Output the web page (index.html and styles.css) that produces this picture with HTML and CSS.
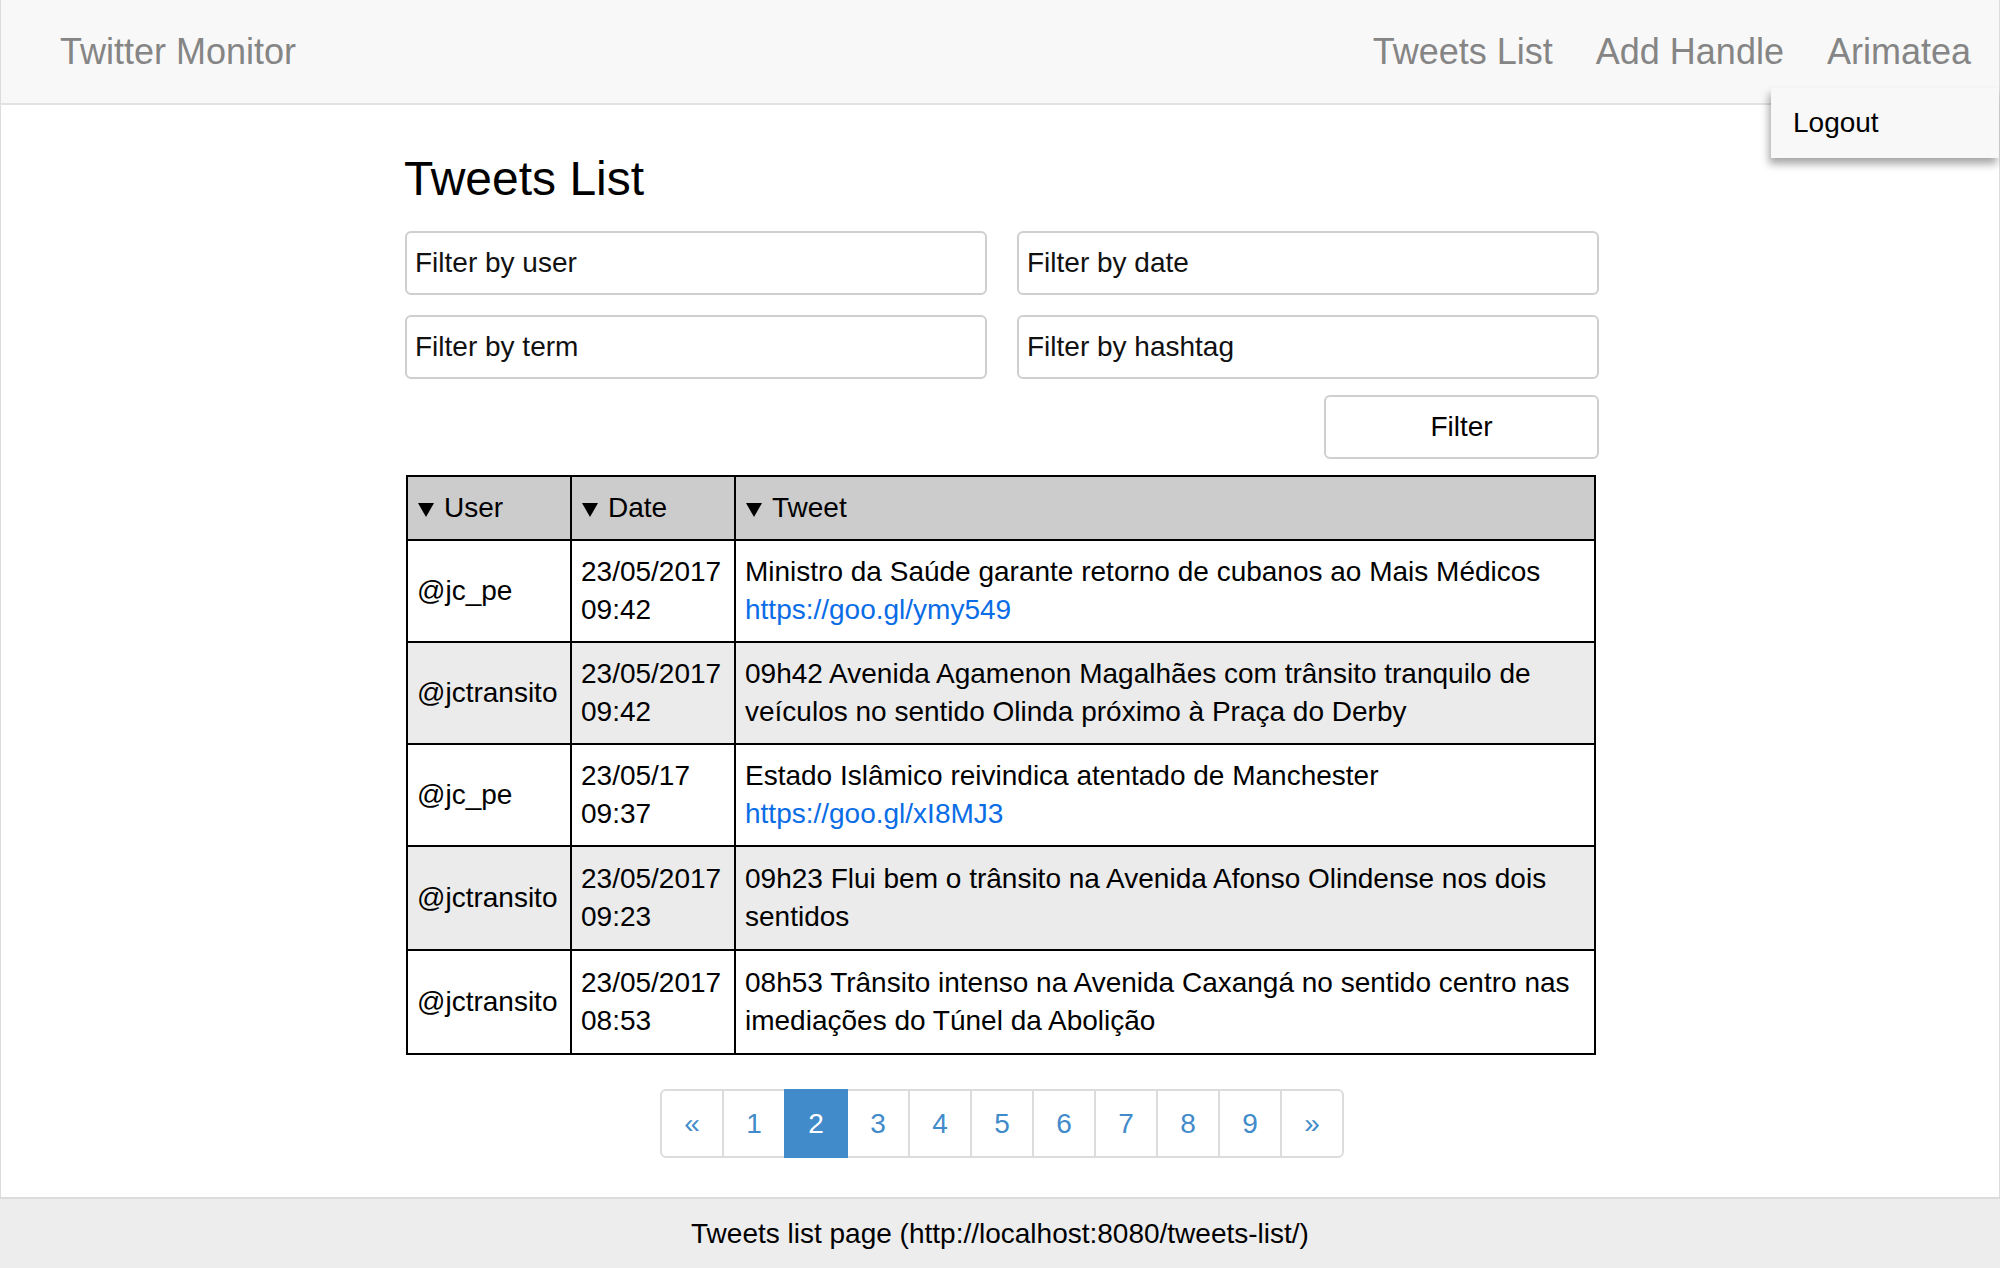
FILE: index.html
```html
<!DOCTYPE html>
<html lang="en">
<head>
<meta charset="utf-8">
<title>Twitter Monitor</title>
<link rel="stylesheet" href="styles.css">
</head>
<body>
<div class="page">
  <header class="navbar">
    <a class="brand" href="#">Twitter Monitor</a>
    <nav class="nav-links">
      <a href="#">Tweets List</a>
      <a href="#">Add Handle</a>
      <a href="#">Arimatea</a>
    </nav>
    <div class="dropdown"><a href="#">Logout</a></div>
  </header>

  <main class="main">
    <div class="container">
      <h1 class="title">Tweets List</h1>
      <form class="filters">
        <input class="field" type="text" placeholder="Filter by user">
        <input class="field" type="text" placeholder="Filter by date">
        <input class="field" type="text" placeholder="Filter by term">
        <input class="field" type="text" placeholder="Filter by hashtag">
      </form>
      <div class="actions"><button class="btn" type="button">Filter</button></div>

      <table class="tweets">
        <colgroup>
          <col class="col-user">
          <col class="col-date">
          <col class="col-tweet">
        </colgroup>
        <thead>
          <tr>
            <th><span class="caret"></span>User</th>
            <th><span class="caret"></span>Date</th>
            <th><span class="caret"></span>Tweet</th>
          </tr>
        </thead>
        <tbody>
          <tr>
            <td>@jc_pe</td>
            <td>23/05/2017 09:42</td>
            <td>Ministro da Saúde garante retorno de cubanos ao Mais Médicos <a href="#">https://goo.gl/ymy549</a></td>
          </tr>
          <tr class="alt">
            <td>@jctransito</td>
            <td>23/05/2017 09:42</td>
            <td>09h42 Avenida Agamenon Magalhães com trânsito tranquilo de veículos no sentido Olinda próximo à Praça do Derby</td>
          </tr>
          <tr>
            <td>@jc_pe</td>
            <td>23/05/17 09:37</td>
            <td>Estado Islâmico reivindica atentado de Manchester <a href="#">https://goo.gl/xI8MJ3</a></td>
          </tr>
          <tr class="alt tall">
            <td>@jctransito</td>
            <td>23/05/2017 09:23</td>
            <td>09h23 Flui bem o trânsito na Avenida Afonso Olindense nos dois sentidos</td>
          </tr>
          <tr class="tall">
            <td>@jctransito</td>
            <td>23/05/2017 08:53</td>
            <td>08h53 Trânsito intenso na Avenida Caxangá no sentido centro nas imediações do Túnel da Abolição</td>
          </tr>
        </tbody>
      </table>

      <ul class="pagination">
        <li><a href="#">&laquo;</a></li>
        <li><a href="#">1</a></li>
        <li class="active"><a href="#">2</a></li>
        <li><a href="#">3</a></li>
        <li><a href="#">4</a></li>
        <li><a href="#">5</a></li>
        <li><a href="#">6</a></li>
        <li><a href="#">7</a></li>
        <li><a href="#">8</a></li>
        <li><a href="#">9</a></li>
        <li><a href="#">&raquo;</a></li>
      </ul>
    </div>
  </main>

  <footer class="footer">Tweets list page (http://localhost:8080/tweets-list/)</footer>
</div>
</body>
</html>
```

FILE: styles.css
```css
* { box-sizing: border-box; }

html, body {
  margin: 0;
  padding: 0;
}

body {
  font-family: "Liberation Sans", Arial, Helvetica, sans-serif;
  font-size: 28px;
  color: #000;
  background: #fff;
}

.page {
  display: flex;
  flex-direction: column;
  min-height: 100vh;
  position: relative;
}

/* Navbar */
.navbar {
  height: 105px;
  display: flex;
  align-items: center;
  justify-content: space-between;
  background: #f8f8f8;
  border-bottom: 2px solid #e2e2e2;
  border-left: 1px solid #dcdcdc;
  border-right: 1px solid #dcdcdc;
  padding: 0 28px 0 59px;
  position: relative;
}

.brand {
  font-size: 36px;
  color: #858585;
  text-decoration: none;
}

.nav-links {
  display: flex;
  gap: 43px;
}

.nav-links a {
  font-size: 36px;
  color: #858585;
  text-decoration: none;
}

.dropdown {
  position: absolute;
  top: 88px;
  right: 0;
  width: 228px;
  height: 70px;
  background: #f8f8f8;
  box-shadow: -2px 6px 8px rgba(0, 0, 0, 0.35);
  display: flex;
  align-items: center;
  padding-left: 22px;
  z-index: 10;
}

.dropdown a {
  color: #000;
  text-decoration: none;
  font-size: 28px;
}

/* Main */
.main {
  flex: 1;
  border-left: 1px solid #dcdcdc;
  border-right: 1px solid #dcdcdc;
  padding-top: 47px;
}

.container {
  width: 1194px;
  margin-left: calc(50% - 595px);
}

.title {
  font-size: 48px;
  line-height: 54px;
  font-weight: normal;
  margin: 0 0 25px -1px;
}

.filters {
  display: grid;
  grid-template-columns: 1fr 1fr;
  column-gap: 30px;
  row-gap: 20px;
  margin: 0;
}

.field {
  height: 64px;
  border: 2px solid #cfcfcf;
  border-radius: 6px;
  padding: 0 8px;
  font-family: inherit;
  font-size: 28px;
  color: #000;
  background: #fff;
  outline: none;
}

.field::placeholder {
  color: #111;
  opacity: 1;
}

.actions {
  display: flex;
  justify-content: flex-end;
  margin-top: 16px;
}

.btn {
  width: 275px;
  height: 64px;
  border: 2px solid #cfcfcf;
  border-radius: 6px;
  background: #fff;
  font-family: inherit;
  font-size: 28px;
  color: #000;
}

/* Table */
.tweets {
  width: 1190px;
  margin: 16px 0 0 1px;
  border-collapse: collapse;
  table-layout: fixed;
  border: 2px solid #000;
}

.col-user { width: 164px; }
.col-date { width: 164px; }

.tweets th,
.tweets td {
  border: 2px solid #000;
  padding: 12px 9px;
  line-height: 38px;
  text-align: left;
  vertical-align: middle;
  font-weight: normal;
}

.tweets tr.tall td {
  padding-top: 13px;
  padding-bottom: 13px;
}

.tweets thead th {
  background: #cccccc;
}

.tweets tr.alt td {
  background: #ebebeb;
}

.tweets a {
  color: #0a6de6;
  text-decoration: none;
}

.caret {
  display: inline-block;
  width: 0;
  height: 0;
  border-left: 8px solid transparent;
  border-right: 8px solid transparent;
  border-top: 14px solid #000;
  margin: 0 10px 0 1px;
}

/* Pagination */
.pagination {
  list-style: none;
  display: flex;
  justify-content: center;
  margin: 34px 0 0 0;
  padding: 0;
}

.pagination li a {
  display: block;
  width: 64px;
  height: 69px;
  line-height: 65px;
  text-align: center;
  border: 2px solid #dcdcdc;
  margin-left: -2px;
  color: #428bca;
  text-decoration: none;
  background: #fff;
}

.pagination li:first-child a {
  margin-left: 0;
  border-radius: 6px 0 0 6px;
}

.pagination li:last-child a {
  border-radius: 0 6px 6px 0;
}

.pagination li.active a {
  background: #428bca;
  border-color: #428bca;
  color: #fff;
  position: relative;
}

/* Footer */
.footer {
  height: 71px;
  border-top: 2px solid #dcdcdc;
  background: #ededed;
  display: flex;
  align-items: center;
  justify-content: center;
  font-size: 28px;
}
```
